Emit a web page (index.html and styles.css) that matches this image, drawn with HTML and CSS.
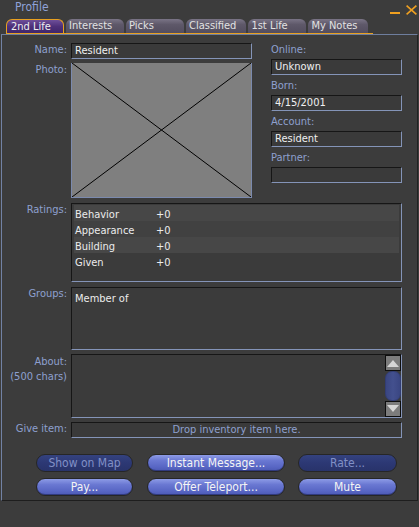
FILE: index.html
```html
<!DOCTYPE html>
<html>
<head>
<meta charset="utf-8">
<title>Profile</title>
<link rel="stylesheet" href="styles.css">
</head>
<body>
<div class="win">
  <div class="titlebar">
    <div class="title">Profile</div>
    <div class="ctrls">
      <div class="min"></div>
      <svg class="close" width="11" height="10" viewBox="0 0 11 10"><path d="M0.6 0.6 L10.4 9.4 M10.4 0.6 L0.6 9.4" stroke="#f0a020" stroke-width="1.6" fill="none"/></svg>
    </div>
  </div>
  <div class="tabs">
    <div class="tab sel">2nd Life</div>
    <div class="tab">Interests</div>
    <div class="tab">Picks</div>
    <div class="tab">Classified</div>
    <div class="tab">1st Life</div>
    <div class="tab">My Notes</div>
  </div>
  <div class="panel">
    <div class="top">
      <div class="left">
        <div class="lbl">Name:</div>
        <div class="field">Resident</div>
        <div class="lbl">Photo:</div>
        <div class="photo">
          <svg width="179" height="134" viewBox="0 0 179 134" preserveAspectRatio="none"><path d="M0 0 L179 134 M179 0 L0 134" stroke="#000" stroke-width="1" fill="none"/></svg>
        </div>
      </div>
      <div class="right">
        <div class="rlbl">Online:</div>
        <div class="field">Unknown</div>
        <div class="rlbl">Born:</div>
        <div class="field">4/15/2001</div>
        <div class="rlbl">Account:</div>
        <div class="field">Resident</div>
        <div class="rlbl">Partner:</div>
        <div class="field"></div>
      </div>
    </div>
    <div class="row r-ratings">
      <div class="lbl">Ratings:</div>
      <div class="box ratings">
        <div class="rrow odd"><span class="rname">Behavior</span><span>+0</span></div>
        <div class="rrow even"><span class="rname">Appearance</span><span>+0</span></div>
        <div class="rrow odd"><span class="rname">Building</span><span>+0</span></div>
        <div class="rrow last"><span class="rname">Given</span><span>+0</span></div>
      </div>
    </div>
    <div class="row r-groups">
      <div class="lbl">Groups:</div>
      <div class="box groups">Member of</div>
    </div>
    <div class="row r-about">
      <div class="lbl tall">About:<br>(500 chars)</div>
      <div class="box about">
        <div class="text"></div>
        <div class="sb">
          <div class="arrow"><svg width="14" height="14" viewBox="0 0 14 14"><path d="M1 11 L7 4 L13 11 Z" fill="#d6d6d6"/></svg></div>
          <div class="thumb"></div>
          <div class="arrow"><svg width="14" height="14" viewBox="0 0 14 14"><path d="M1 3 L13 3 L7 10 Z" fill="#d6d6d6"/></svg></div>
        </div>
      </div>
    </div>
    <div class="row r-give">
      <div class="lbl">Give item:</div>
      <div class="field give">Drop inventory item here.</div>
    </div>
    <div class="btns">
      <div class="brow">
        <div class="btn dis w1">Show on Map</div>
        <div class="btn w2">Instant Message...</div>
        <div class="btn dis w3">Rate...</div>
      </div>
      <div class="brow">
        <div class="btn w1">Pay...</div>
        <div class="btn w2">Offer Teleport...</div>
        <div class="btn w3">Mute</div>
      </div>
    </div>
  </div>
</div>
</body>
</html>
```
FILE: styles.css
```css
html, body {
  margin: 0;
  padding: 0;
}
body {
  width: 419px;
  height: 527px;
  overflow: hidden;
  background: #3c3c3c;
  font-family: "DejaVu Sans Condensed", "DejaVu Sans", sans-serif;
  font-stretch: condensed;
  font-size: 11px;
  color: #e8e8e8;
}
.win {
  width: 419px;
  height: 527px;
}
.titlebar {
  height: 19px;
  display: flex;
  align-items: flex-start;
}
.title {
  margin-left: 15px;
  font-size: 12px;
  line-height: 15px;
  color: #8fa2d8;
}
.ctrls {
  margin-left: auto;
  margin-right: 2px;
  display: flex;
  align-items: flex-start;
}
.min {
  width: 10px;
  height: 2px;
  margin-top: 12px;
  margin-right: 6px;
  background: #f0a020;
}
.close {
  display: block;
  margin-top: 5px;
}
.tabs {
  display: flex;
  align-items: flex-end;
  gap: 2px;
  margin-left: 6px;
  width: 367px;
  height: 14px;
  border-bottom: 1px solid #e8a020;
}
.tab {
  box-sizing: border-box;
  height: 14px;
  min-width: 58px;
  padding: 0 10px 0 3px;
  border-radius: 6px 6px 0 0;
  background: linear-gradient(#7a7486, #5e5869 40%, #534d5e);
  color: #e2e2e2;
  line-height: 14px;
  white-space: nowrap;
}
.tab.sel {
  border: 1px solid #e8a020;
  border-bottom: none;
  padding-left: 4px;
  line-height: 13px;
  background: linear-gradient(#6e4f9a, #4e3079 50%, #40266a);
  color: #f0f0f0;
}
.panel {
  box-sizing: border-box;
  height: 467px;
  margin: 0 1px;
  padding-top: 8px;
  border-top: 1px solid #6e7e9e;
  border-left: 1px solid #7282a4;
  border-right: 1px solid #222222;
  border-bottom: 1px solid #1e1e1e;
}
.top {
  display: flex;
  align-items: flex-start;
  height: 155px;
}
.left {
  display: grid;
  grid-template-columns: 65px 181px;
  column-gap: 4px;
  row-gap: 4px;
  align-items: start;
}
.lbl {
  text-align: right;
  color: #8ea0cf;
  line-height: 14px;
  white-space: nowrap;
}
.lbl.tall {
  line-height: 15px;
}
.field {
  box-sizing: border-box;
  height: 16px;
  padding: 0 3px;
  border: 1px solid;
  border-color: #161616 #8494b8 #8494b8 #161616;
  background: #3a3a3a;
  color: #f0f0f0;
  line-height: 14px;
  white-space: nowrap;
  overflow: hidden;
}
.photo {
  box-sizing: border-box;
  height: 135px;
  border: 1px solid #7b8aae;
  border-top: none;
  background: #7f7f7f;
}
.photo svg {
  display: block;
}
.right {
  margin-left: 19px;
  width: 131px;
  display: flex;
  flex-direction: column;
}
.rlbl {
  height: 16px;
  color: #8ea0cf;
  line-height: 14px;
}
.right .field + .rlbl {
  margin-top: 4px;
}
.row {
  display: flex;
  align-items: flex-start;
  gap: 4px;
}
.row .lbl {
  width: 65px;
  flex: none;
}
.box {
  box-sizing: border-box;
  width: 331px;
  border: 1px solid;
  border-color: #161616 #8494b8 #8494b8 #161616;
  background: #3b3b3b;
}
.r-ratings {
  margin-top: 5px;
}
.ratings {
  height: 79px;
  padding: 1px 2px;
}
.rrow {
  box-sizing: border-box;
  height: 16px;
  padding: 4px 0 0 1px;
  line-height: 12px;
  display: flex;
  color: #ececec;
}
.rrow.odd {
  background: #474747;
}
.rrow.even {
  background: #414141;
}
.rname {
  width: 81px;
}
.r-groups {
  margin-top: 5px;
}
.groups {
  height: 63px;
  padding: 4px 3px 0;
  line-height: 14px;
  color: #ececec;
}
.r-about {
  margin-top: 4px;
}
.about {
  height: 64px;
  display: flex;
}
.about .text {
  flex: 1;
}
.sb {
  width: 16px;
  display: flex;
  flex-direction: column;
}
.arrow {
  box-sizing: border-box;
  width: 16px;
  height: 16px;
  border: 1px solid #0e0e0e;
  background: #7c7c7c;
}
.arrow svg {
  display: block;
}
.thumb {
  box-sizing: border-box;
  height: 30px;
  border: 1px solid #323d74;
  border-radius: 7px;
  background: linear-gradient(90deg, #3a4682, #43508e 50%, #3a4682);
}
.r-give {
  margin-top: 4px;
}
.give {
  width: 331px;
  text-align: center;
  color: #8ea0cf;
}
.btns {
  margin-top: 16px;
  padding-left: 34px;
  display: flex;
  flex-direction: column;
  gap: 6px;
}
.brow {
  display: flex;
}
.btn {
  box-sizing: border-box;
  height: 18px;
  border-radius: 9px;
  border: 1px solid #262626;
  background: linear-gradient(#8d9be6, #6a78d2 35%, #5866c4 75%, #4c59b4);
  box-shadow: inset 0 -1px 0 rgba(20, 25, 70, 0.5);
  color: #f4f4f4;
  text-align: center;
  font-size: 12px;
  line-height: 16px;
  white-space: nowrap;
}
.btn.dis {
  background: linear-gradient(#34427f, #2c3874 50%, #28336a);
  box-shadow: none;
  color: #8190c6;
}
.w1 {
  width: 97px;
}
.w2 {
  width: 138px;
  margin-left: 14px;
}
.w3 {
  width: 99px;
  margin-left: 13px;
}
```
